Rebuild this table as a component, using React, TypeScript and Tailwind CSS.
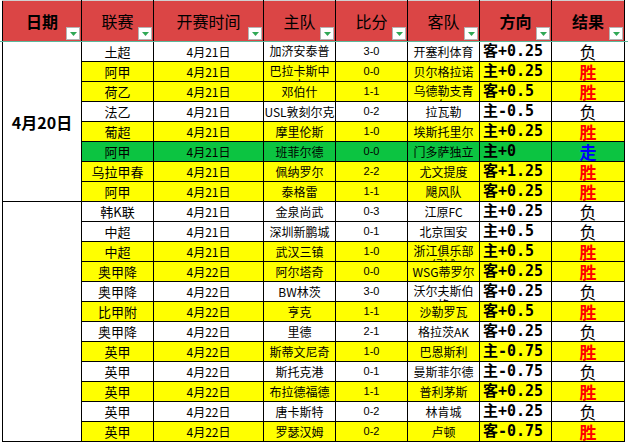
import React from "react";

type Row = [string, string, string, string, string, string, string];

const rows: Row[] = [
  ["土超", "4月21日", "加济安泰普FK", "3-0", "开塞利体育", "客+0.25", "负"],
  ["阿甲", "4月21日", "巴拉卡斯中央", "0-0", "贝尔格拉诺", "主+0.25", "胜"],
  ["荷乙", "4月21日", "邓伯什", "1-1", "乌德勒支青年", "客+0.5", "胜"],
  ["法乙", "4月21日", "USL敦刻尔克", "0-2", "拉瓦勒", "主-0.5", "负"],
  ["葡超", "4月21日", "摩里伦斯", "1-0", "埃斯托里尔", "主+0.25", "胜"],
  ["阿甲", "4月21日", "班菲尔德", "0-0", "门多萨独立", "主+0", "走"],
  ["乌拉甲春", "4月21日", "佩纳罗尔", "2-2", "尤文提度", "客+1.25", "胜"],
  ["阿甲", "4月21日", "泰格雷", "1-1", "飓风队", "客+0.25", "胜"],
  ["韩K联", "4月21日", "金泉尚武", "0-3", "江原FC", "主+0.25", "负"],
  ["中超", "4月21日", "深圳新鹏城", "0-1", "北京国安", "主+0.5", "负"],
  ["中超", "4月21日", "武汉三镇", "1-0", "浙江俱乐部绿城", "主+0.5", "胜"],
  ["奥甲降", "4月22日", "阿尔塔奇", "0-0", "WSG蒂罗尔", "客+0.25", "胜"],
  ["奥甲降", "4月22日", "BW林茨", "3-0", "沃尔夫斯伯格", "客+0.25", "负"],
  ["比甲附", "4月22日", "亨克", "1-1", "沙勒罗瓦", "客+0.5", "胜"],
  ["奥甲降", "4月22日", "里德", "2-1", "格拉茨AK", "客+0.25", "负"],
  ["英甲", "4月22日", "斯蒂文尼奇", "1-0", "巴恩斯利", "主-0.75", "胜"],
  ["英甲", "4月22日", "斯托克港", "0-1", "曼斯菲尔德", "主-0.75", "负"],
  ["英甲", "4月22日", "布拉德福德", "1-1", "普利茅斯", "客+0.25", "胜"],
  ["英甲", "4月22日", "唐卡斯特", "0-2", "林肯城", "主+0.25", "负"],
  ["英甲", "4月22日", "罗瑟汉姆", "0-2", "卢顿", "客-0.75", "胜"],
];

// names that wrap onto a second (clipped) line, like the sheet's wrapped cells
const wrapped = ["加济安泰普FK", "巴拉卡斯中央", "乌德勒支青年", "浙江俱乐部绿城", "沃尔夫斯伯格"];

const headers: { label: string; bold: boolean }[] = [
  { label: "日期", bold: true },
  { label: "联赛", bold: false },
  { label: "开赛时间", bold: false },
  { label: "主队", bold: false },
  { label: "比分", bold: false },
  { label: "客队", bold: false },
  { label: "方向", bold: true },
  { label: "结果", bold: true },
];

const FilterButton = () => (
  <span className="absolute right-[1px] bottom-[1px] w-[14px] h-[13px] bg-white border border-[#b4b4b4] flex items-center justify-center">
    <svg width="7" height="4" viewBox="0 0 7 4">
      <polygon points="0,0 7,0 3.5,4" fill="#2fa855" />
    </svg>
  </span>
);

const rowBg = (res: string) =>
  res === "胜" ? "bg-[#ffff00]" : res === "走" ? "bg-[#0cc441]" : "bg-white";

const Cell = ({ children, wrap }: { children: string; wrap?: boolean }) =>
  wrap ? (
    <div className="h-[19px] overflow-hidden leading-[14px] pt-[2px] px-[3px] text-center break-all">
      {children}
    </div>
  ) : (
    <div className="h-[19px] overflow-hidden whitespace-nowrap flex items-center justify-center">
      {children}
    </div>
  );

export default function App() {
  return (
    <div className="relative w-[628px] h-[444px] bg-white overflow-hidden pl-[2px] font-['Noto_Sans_CJK_SC',sans-serif] text-black">
      <table className="table-fixed border-collapse w-[622px]">
        <colgroup>
          <col className="w-[79px]" />
          <col className="w-[72px]" />
          <col className="w-[110px]" />
          <col className="w-[72px]" />
          <col className="w-[72px]" />
          <col className="w-[72px]" />
          <col className="w-[72px]" />
          <col className="w-[73px]" />
        </colgroup>
        <thead>
          <tr className="h-[41px]">
            {headers.map((h) => (
              <th
                key={h.label}
                className={`relative p-0 bg-[#db4545] border border-black border-t-[#d0d0d0] border-b-[#5cb89c] text-[16px] leading-none ${
                  h.bold ? "font-bold" : "font-normal"
                }`}
              >
                <div className="pb-[1px]">{h.label}</div>
                <FilterButton />
              </th>
            ))}
          </tr>
        </thead>
        <tbody>
          {rows.map((r, i) => {
            const bg = rowBg(r[6]);
            return (
              <tr key={i} className="h-[20px]">
                {i === 0 && (
                  <td rowSpan={8} className="p-0 bg-white border border-black text-center align-middle text-[16px] font-bold">
                    4月20日
                  </td>
                )}
                {i === 8 && <td rowSpan={12} className="p-0 bg-white border border-black" />}
                <td className={`p-0 border border-black text-[13px] ${bg}`}>
                  <Cell>{r[0]}</Cell>
                </td>
                <td className={`p-0 border border-black text-[12px] ${bg}`}>
                  <Cell>{r[1]}</Cell>
                </td>
                <td className={`p-0 border border-black text-[12px] ${bg}`}>
                  <Cell wrap={wrapped.includes(r[2])}>{r[2]}</Cell>
                </td>
                <td className={`p-0 border border-black text-[11px] font-['Liberation_Sans',sans-serif] ${bg}`}>
                  <Cell>{r[3]}</Cell>
                </td>
                <td className={`p-0 border border-black text-[12px] ${bg}`}>
                  <Cell wrap={wrapped.includes(r[4])}>{r[4]}</Cell>
                </td>
                <td className={`p-0 border border-black ${bg}`}>
                  <div className="h-[19px] overflow-hidden whitespace-nowrap flex items-center pl-[3px] text-[15px] font-bold font-['DejaVu_Sans_Mono','Noto_Sans_CJK_SC',monospace]">
                    {r[5]}
                  </div>
                </td>
                <td className={`p-0 border border-black ${bg}`}>
                  <div
                    className={`h-[19px] flex items-center justify-center text-[17px] ${
                      r[6] === "胜"
                        ? "text-[#ff0000] font-bold"
                        : r[6] === "走"
                        ? "text-[#0000ff] font-bold"
                        : "text-black"
                    }`}
                  >
                    {r[6]}
                  </div>
                </td>
              </tr>
            );
          })}
        </tbody>
      </table>
      {/* frozen pane line */}
      <div className="absolute left-0 right-0 top-[41px] h-px bg-[#5cb89c]" />
    </div>
  );
}
